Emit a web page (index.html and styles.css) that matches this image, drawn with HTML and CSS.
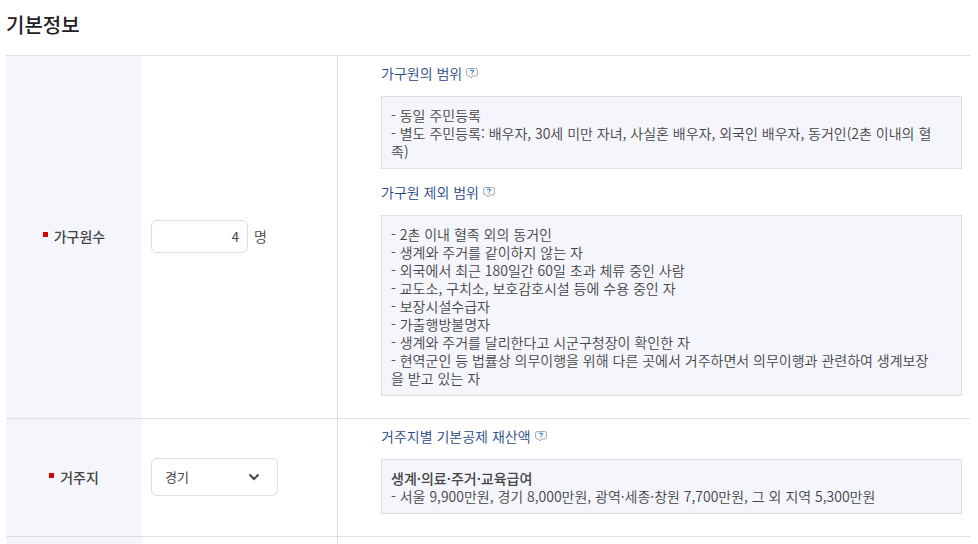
FILE: index.html
```html
<!DOCTYPE html>
<html lang="ko">
  <head>
    <meta charset="UTF-8" />
    <meta name="viewport" content="width=device-width, initial-scale=1.0" />
    <title>기본정보</title>
    <link rel="stylesheet" href="styles.css">
  </head>
  <body>
    <!-- speech bubble shared by the help links -->
    <svg class="sprite" aria-hidden="true">
      <symbol id="help" viewBox="0 0 12 11">
        <path d="M2.5 .5h7a2 2 0 0 1 2 2v3.500a2 2 0 0 1-2 2H7L5 10 3.500 8h-1a2 2 0 0 1-2-2V2.500a2 2 0 0 1 2-2z" fill="#fafafa" stroke="#a9a9a9" />
        <path d="M4.500 3q0-1 1.500-1t1.500 1q0 .8-1.500 1.500M6 5.500v1" fill="none" stroke="#3f7fc8" stroke-width="1.2" />
      </symbol>
    </svg>

    <h2>기본정보</h2>
    <table class="form-table">
      <tbody>
        <tr>
          <th scope="row"><label class="required" for="members">가구원수</label></th>
          <td>
            <div class="field">
              <input type="text" id="members" class="count" value="4" />
              <span>명</span>
            </div>
          </td>
          <td class="guide">
            <a href="#members">가구원의 범위<svg class="help"><use href="#help" /></svg></a>
            <div class="box">
              - 동일 주민등록<br />
              - 별도 주민등록: 배우자, 30세 미만 자녀, 사실혼 배우자, 외국인 배우자, 동거인(2촌 이내의 혈<br />족)
            </div>
            <a href="#members">가구원 제외 범위<svg class="help"><use href="#help" /></svg></a>
            <div class="box">
              - 2촌 이내 혈족 외의 동거인<br />
              - 생계와 주거를 같이하지 않는 자<br />
              - 외국에서 최근 180일간 60일 초과 체류 중인 사람<br />
              - 교도소, 구치소, 보호감호시설 등에 수용 중인 자<br />
              - 보장시설수급자<br />
              - 가출행방불명자<br />
              - 생계와 주거를 달리한다고 시군구청장이 확인한 자<br />
              - 현역군인 등 법률상 의무이행을 위해 다른 곳에서 거주하면서 의무이행과 관련하여 생계보장<br />을 받고 있는 자
            </div>
          </td>
        </tr>
        <tr>
          <th scope="row"><label class="required" for="region">거주지</label></th>
          <td>
            <div class="select">
              <select id="region">
                <option>서울</option>
                <option selected>경기</option>
                <option>광역·세종·창원</option>
                <option>그 외 지역</option>
              </select>
              <svg class="arrow" viewBox="0 0 12 8"><path d="M1.500 1.500L6 6l4.500-4.500" /></svg>
            </div>
          </td>
          <td class="guide">
            <a href="#region">거주지별 기본공제 재산액<svg class="help"><use href="#help" /></svg></a>
            <div class="box">
              <strong>생계·의료·주거·교육급여</strong><br />
              - 서울 9,900만원, 경기 8,000만원, 광역·세종·창원 7,700만원, 그 외 지역 5,300만원
            </div>
          </td>
        </tr>
        <tr>
          <th></th>
          <td></td>
          <td class="guide"></td>
        </tr>
      </tbody>
    </table>
  </body>
</html>
```
FILE: styles.css
```css
body {
  margin: 0;
  padding: 12px 8px 0 6px;
  font-family: "Noto Sans CJK KR", sans-serif;
  font-size: 14px;
  font-weight: 350;
  line-height: 18px;
  color: #444;
  background: #fff;
  overflow: hidden;
}
.sprite {
  display: none;
}
h2 {
  margin: 0 0 17px;
  font-size: 20px;
  line-height: 26px;
  font-weight: 500;
  color: #222;
}
.form-table {
  width: 100%;
  border-collapse: separate;
  border-spacing: 0;
}
.form-table th,
.form-table td {
  padding: 8px 9px 10px;
  border-top: 1px solid #ddd;
}
.form-table th {
  width: 118px;
  background: #f5f6fc;
  font-weight: 500;
}
.form-table td {
  width: 177px;
}
.form-table .guide {
  width: auto;
  padding: 8px 8px 8px 43px;
  border-left: 1px solid #ddd;
  vertical-align: top;
}
.required {
  display: flex;
  justify-content: center;
  gap: 6px;
}
.required::before {
  content: "";
  width: 5px;
  height: 5px;
  margin-top: 5px;
  background: #d50000;
}
.field {
  display: flex;
  align-items: center;
  gap: 6px;
}
input,
select {
  box-sizing: border-box;
  border: 1px solid #ddd;
  border-radius: 6px;
  background: #fff;
  color: #444;
  font-family: inherit;
}
.count {
  width: 97px;
  height: 33px;
  padding: 0 8px;
  font-size: 13px;
  text-align: right;
}
.select {
  display: grid;
  width: 127px;
  align-items: center;
}
.select select {
  grid-area: 1 / 1;
  width: 100%;
  height: 38px;
  padding: 0 13px;
  font-size: 13px;
  appearance: none;
}
.arrow {
  grid-area: 1 / 1;
  justify-self: end;
  width: 12px;
  height: 8px;
  margin-right: 18px;
  fill: none;
  stroke: #444;
  stroke-width: 2;
  pointer-events: none;
}
.guide a {
  display: flex;
  align-items: center;
  gap: 4px;
  color: #1f4788;
  text-decoration: none;
}
.help {
  width: 12px;
  height: 11px;
}
.box {
  margin: 14px 0;
  padding: 9px 9px 8px;
  border: 1px solid #ddd;
  background: #f5f6fc;
}
.box strong {
  font-weight: 500;
}
```
